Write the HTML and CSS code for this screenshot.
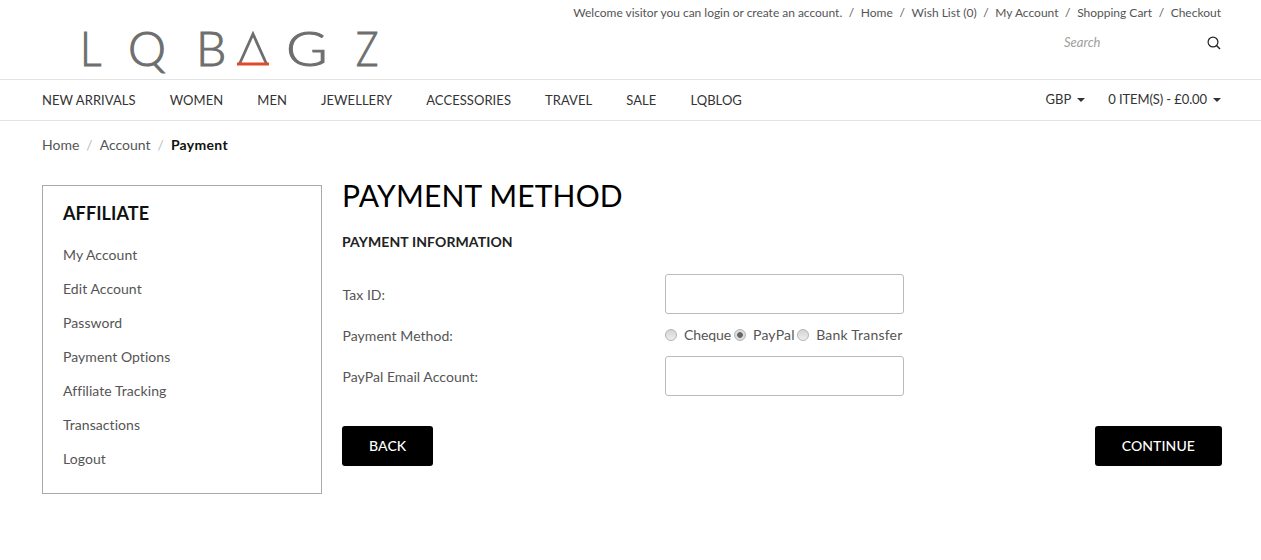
FILE: index.html
```html
<!DOCTYPE html>
<html lang="en">
<head>
<meta charset="utf-8">
<title>Payment Method</title>
<link rel="stylesheet" href="styles.css">
</head>
<body>
<header class="header">
  <div class="logo" aria-label="LQBAGZ">
    <span class="l l1">L</span><span class="l l2">Q</span><span class="l l3">B</span>
    <svg class="delta" width="32" height="36" viewBox="0 0 32 36"><path d="M2.500 33 16 3 29.500 33" fill="none" stroke="#6e6e6e" stroke-width="2.800"/><rect x="0" y="31.500" width="32" height="3" fill="#e04a2a"/></svg>
    <span class="l l4">G</span><span class="l l5">Z</span>
  </div>
  <div class="header-right">
    <div class="toplinks">
      <span class="welcome">Welcome visitor you can login or create an account.</span><i>/</i><span>Home</span><i>/</i><span>Wish List (0)</span><i>/</i><span>My Account</span><i>/</i><span>Shopping Cart</span><i>/</i><span>Checkout</span>
    </div>
    <div class="search">
      <span class="search-text">Search</span>
      <svg class="search-icon" width="14" height="14" viewBox="0 0 14 14"><circle cx="6" cy="6" r="4.900" fill="none" stroke="#222" stroke-width="1.200"/><path d="M9.500 9.500 13 13" stroke="#222" stroke-width="1.400"/></svg>
    </div>
  </div>
</header>
<nav class="nav">
  <div class="menu"><span>NEW ARRIVALS</span><span>WOMEN</span><span>MEN</span><span>JEWELLERY</span><span>ACCESSORIES</span><span>TRAVEL</span><span>SALE</span><span>LQBLOG</span></div>
  <div class="nav-right"><span class="drop">GBP<b class="caret"></b></span><span class="drop cart">0 ITEM(S) - £0.00<b class="caret"></b></span></div>
</nav>
<div class="crumbs"><span>Home</span><i>/</i><span>Account</span><i>/</i><strong>Payment</strong></div>
<main class="main">
  <aside class="side">
    <h3>AFFILIATE</h3>
    <ul>
      <li>My Account</li><li>Edit Account</li><li>Password</li><li>Payment Options</li><li>Affiliate Tracking</li><li>Transactions</li><li>Logout</li>
    </ul>
  </aside>
  <section class="content">
    <h1>PAYMENT METHOD</h1>
    <h2>PAYMENT INFORMATION</h2>
    <div class="row first"><label>Tax ID:</label><div class="input"></div></div>
    <div class="row radio-row"><label>Payment Method:</label>
      <div class="radios">
        <b class="radio"></b><span class="rl r1">Cheque</span><b class="radio on"></b><span class="rl r2">PayPal</span><b class="radio"></b><span class="rl">Bank Transfer</span>
      </div>
    </div>
    <div class="row"><label>PayPal Email Account:</label><div class="input"></div></div>
    <div class="buttons"><span class="btn">BACK</span><span class="btn">CONTINUE</span></div>
  </section>
</main>
</body>
</html>
```
FILE: styles.css
```css
* { box-sizing: border-box; }
html, body { margin: 0; padding: 0; }
body { background: #fff; font-family: Lato, sans-serif; font-size: 14px; color: #444; width: 1261px; height: 560px; overflow: hidden; }
i { font-style: normal; }
.header { height: 80px; padding: 0 39px 0 80px; display: flex; justify-content: space-between; border-bottom: 1px solid #e3e3e3; }
.logo { display: flex; align-items: flex-start; padding-top: 25px; height: 79px; }
.l { font-size: 48px; line-height: 46px; font-weight: 300; -webkit-text-stroke: 1px #6e6e6e; color: #6e6e6e; display: block; transform-origin: left center; }
.l1 { width: 48px; transform: scaleX(.88); }
.l2 { width: 68px; }
.l3 { width: 41px; }
.delta { margin-top: 6px; margin-right: 17px; }
.l4 { width: 70px; transform: scaleX(1.18); }
.l5 { transform: scaleX(.78); }
.header-right { display: flex; flex-direction: column; align-items: flex-end; }
.toplinks { font-size: 12px; line-height: 16px; padding: 5px 1px 0 0; color: #555; }
.toplinks i { margin: 0 6.600px; }
.welcome { letter-spacing: -.02px; }
.search { display: flex; align-items: center; margin-top: 14px; }
.search-text { font-size: 13px; font-style: italic; color: #a0a0a0; width: 143px; line-height: 18px; margin-top: -2px; }
.search-icon { display: block; margin-right: 1px; }
.nav { height: 41px; padding: 0 40px 0 42px; display: flex; justify-content: space-between; align-items: center; border-bottom: 1px solid #e3e3e3; font-size: 13px; color: #333; }
.menu { display: flex; gap: 34px; letter-spacing: .06px; }
.nav-right { display: flex; gap: 23px; margin-top: -2px; }
.cart { letter-spacing: -.1px; }
.caret { display: inline-block; margin-left: 6px; vertical-align: 2px; border: 4px solid transparent; border-top-color: #333; border-bottom: 0; }
.crumbs { padding: 15px 42px 0; line-height: 17px; height: 64px; font-size: 14px; color: #555; }
.crumbs i { margin: 0 7px; color: #bbb; }
.crumbs strong { color: #111; font-weight: 700; letter-spacing: .3px; }
.main { display: flex; gap: 20px; padding: 0 39px 0 42px; }
.side { width: 280px; height: 309px; border: 1px solid #aaa; padding: 16px 20px 0; }
.side h3 { margin: 0; font-size: 18px; line-height: 22px; font-weight: 700; color: #111; letter-spacing: .1px; }
.side ul { list-style: none; margin: 14px 0 0; padding: 0; }
.side li { height: 34px; line-height: 34px; color: #555; letter-spacing: .06px; }
.content { flex: 1; }
.content h1 { margin: 0; font-size: 30px; line-height: 20px; font-weight: 400; color: #000; letter-spacing: .15px; }
.content h2 { margin: 28px 0 0; font-size: 14px; line-height: 17px; font-weight: 700; color: #222; letter-spacing: .1px; }
.row { display: flex; align-items: center; height: 40px; margin-top: 1px; }
.row.first { margin-top: 24px; }
.row label { width: 323px; padding-left: .5px; color: #555; letter-spacing: .05px; }
.radio-row { margin: 1px 0; height: 40px; }
.input { width: 239px; height: 40px; border: 1px solid #bbb; border-radius: 3px; background: #fff; }
.radios { display: flex; align-items: center; }
.radio { width: 12px; height: 12px; border-radius: 50%; border: 1px solid #b4b4b4; background: linear-gradient(#d4d4d4, #eee); margin-right: 7px; }
.radio.on { background: radial-gradient(circle, #666 0 2.500px, #ddd 3.200px); }
.rl { color: #555; letter-spacing: .2px; margin-top: -2px; }
.r1 { margin-right: 3px; letter-spacing: -.1px; }
.r2 { margin-right: 2.500px; }
.buttons { display: flex; justify-content: space-between; margin-top: 30px; }
.btn { display: block; height: 40px; line-height: 40px; padding: 0 27px; background: #000; color: #fff; border-radius: 3px; font-size: 14px; font-weight: 500; letter-spacing: .1px; }
```
